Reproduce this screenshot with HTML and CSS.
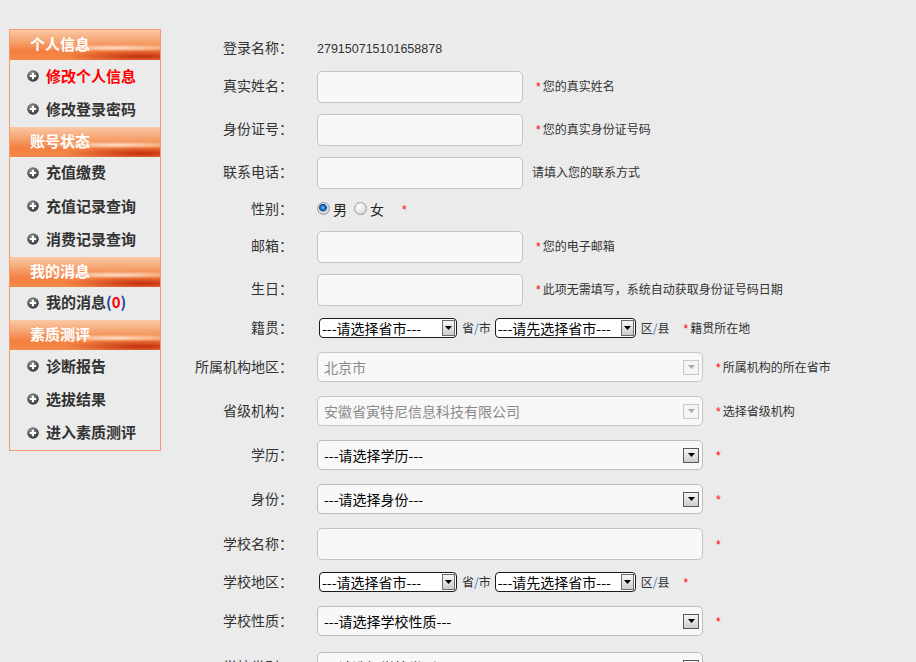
FILE: index.html
```html
<!DOCTYPE html>
<html lang="zh-CN">
<head>
<meta charset="utf-8">
<title>个人信息</title>
<link rel="stylesheet" href="styles.css">
</head>
<body>
<svg class="defs" width="0" height="0" aria-hidden="true">
  <defs>
    <radialGradient id="ball" cx="40%" cy="30%" r="75%">
      <stop offset="0" stop-color="#9a9a9a"/>
      <stop offset="0.6" stop-color="#555"/>
      <stop offset="1" stop-color="#333"/>
    </radialGradient>
  </defs>
</svg>
<div class="page">
  <aside class="side">
    <div class="side-head">个人信息</div>
    <ul class="side-list">
      <li class="active"><svg class="ico" viewBox="0 0 12 12"><circle cx="6" cy="6" r="5.8" fill="url(#ball)"/><path d="M6 2.8v6.4M2.8 6h6.4" stroke="#fff" stroke-width="2"/></svg>修改个人信息</li>
      <li><svg class="ico" viewBox="0 0 12 12"><circle cx="6" cy="6" r="5.8" fill="url(#ball)"/><path d="M6 2.8v6.4M2.8 6h6.4" stroke="#fff" stroke-width="2"/></svg>修改登录密码</li>
    </ul>
    <div class="side-head">账号状态</div>
    <ul class="side-list">
      <li><svg class="ico" viewBox="0 0 12 12"><circle cx="6" cy="6" r="5.8" fill="url(#ball)"/><path d="M6 2.8v6.4M2.8 6h6.4" stroke="#fff" stroke-width="2"/></svg>充值缴费</li>
      <li><svg class="ico" viewBox="0 0 12 12"><circle cx="6" cy="6" r="5.8" fill="url(#ball)"/><path d="M6 2.8v6.4M2.8 6h6.4" stroke="#fff" stroke-width="2"/></svg>充值记录查询</li>
      <li><svg class="ico" viewBox="0 0 12 12"><circle cx="6" cy="6" r="5.8" fill="url(#ball)"/><path d="M6 2.8v6.4M2.8 6h6.4" stroke="#fff" stroke-width="2"/></svg>消费记录查询</li>
    </ul>
    <div class="side-head">我的消息</div>
    <ul class="side-list">
      <li><svg class="ico" viewBox="0 0 12 12"><circle cx="6" cy="6" r="5.8" fill="url(#ball)"/><path d="M6 2.8v6.4M2.8 6h6.4" stroke="#fff" stroke-width="2"/></svg>我的消息<span class="paren">(</span><span class="count">0</span><span class="paren">)</span></li>
    </ul>
    <div class="side-head">素质测评</div>
    <ul class="side-list">
      <li><svg class="ico" viewBox="0 0 12 12"><circle cx="6" cy="6" r="5.8" fill="url(#ball)"/><path d="M6 2.8v6.4M2.8 6h6.4" stroke="#fff" stroke-width="2"/></svg>诊断报告</li>
      <li><svg class="ico" viewBox="0 0 12 12"><circle cx="6" cy="6" r="5.8" fill="url(#ball)"/><path d="M6 2.8v6.4M2.8 6h6.4" stroke="#fff" stroke-width="2"/></svg>选拔结果</li>
      <li><svg class="ico" viewBox="0 0 12 12"><circle cx="6" cy="6" r="5.8" fill="url(#ball)"/><path d="M6 2.8v6.4M2.8 6h6.4" stroke="#fff" stroke-width="2"/></svg>进入素质测评</li>
    </ul>
  </aside>

  <form class="form">
    <div class="row row-static">
      <span class="lbl">登录名称：</span>
      <div class="field"><span class="value">279150715101658878</span></div>
    </div>
    <div class="row">
      <span class="lbl">真实姓名：</span>
      <div class="field"><input class="txt" type="text"><span class="hint"><i class="req">*</i>您的真实姓名</span></div>
    </div>
    <div class="row">
      <span class="lbl">身份证号：</span>
      <div class="field"><input class="txt" type="text"><span class="hint"><i class="req">*</i>您的真实身份证号码</span></div>
    </div>
    <div class="row">
      <span class="lbl">联系电话：</span>
      <div class="field"><input class="txt" type="text"><span class="hint">请填入您的联系方式</span></div>
    </div>
    <div class="row row-radio">
      <span class="lbl">性别：</span>
      <div class="field">
        <label class="opt"><input class="radio" type="radio" name="sex" checked>男</label>
        <label class="opt"><input class="radio" type="radio" name="sex">女</label>
        <i class="req req-far">*</i>
      </div>
    </div>
    <div class="row">
      <span class="lbl">邮箱：</span>
      <div class="field"><input class="txt" type="text"><span class="hint"><i class="req">*</i>您的电子邮箱</span></div>
    </div>
    <div class="row">
      <span class="lbl">生日：</span>
      <div class="field"><input class="txt" type="text"><span class="hint"><i class="req">*</i>此项无需填写，系统自动获取身份证号码日期</span></div>
    </div>
    <div class="row row-area">
      <span class="lbl">籍贯：</span>
      <div class="field field-area">
        <div class="sel sel-sm"><span>---请选择省市---</span><span class="sel-btn"><svg viewBox="0 0 7 4"><path d="M0 0h7L3.5 4z"/></svg></span></div>
        <span class="unit">省<b class="slash">/</b>市</span>
        <div class="sel sel-sm sel-sm2"><span>---请先选择省市---</span><span class="sel-btn"><svg viewBox="0 0 7 4"><path d="M0 0h7L3.5 4z"/></svg></span></div>
        <span class="unit">区<b class="slash">/</b>县</span>
        <span class="hint hint-far"><i class="req">*</i>籍贯所在地</span>
      </div>
    </div>
    <div class="row row-sel">
      <span class="lbl">所属机构地区：</span>
      <div class="field">
        <div class="sel is-disabled"><span>北京市</span><span class="sel-btn"><svg viewBox="0 0 7 4"><path d="M0 0h7L3.5 4z"/></svg></span></div>
        <span class="hint"><i class="req">*</i>所属机构的所在省市</span>
      </div>
    </div>
    <div class="row row-sel">
      <span class="lbl">省级机构：</span>
      <div class="field">
        <div class="sel is-disabled"><span>安徽省寅特尼信息科技有限公司</span><span class="sel-btn"><svg viewBox="0 0 7 4"><path d="M0 0h7L3.5 4z"/></svg></span></div>
        <span class="hint"><i class="req">*</i>选择省级机构</span>
      </div>
    </div>
    <div class="row row-sel">
      <span class="lbl">学历：</span>
      <div class="field">
        <div class="sel"><span>---请选择学历---</span><span class="sel-btn"><svg viewBox="0 0 7 4"><path d="M0 0h7L3.5 4z"/></svg></span></div>
        <span class="hint"><i class="req">*</i></span>
      </div>
    </div>
    <div class="row row-sel">
      <span class="lbl">身份：</span>
      <div class="field">
        <div class="sel"><span>---请选择身份---</span><span class="sel-btn"><svg viewBox="0 0 7 4"><path d="M0 0h7L3.5 4z"/></svg></span></div>
        <span class="hint"><i class="req">*</i></span>
      </div>
    </div>
    <div class="row row-wide">
      <span class="lbl">学校名称：</span>
      <div class="field"><input class="txt txt-wide" type="text"><span class="hint"><i class="req">*</i></span></div>
    </div>
    <div class="row row-area2">
      <span class="lbl">学校地区：</span>
      <div class="field field-area">
        <div class="sel sel-sm"><span>---请选择省市---</span><span class="sel-btn"><svg viewBox="0 0 7 4"><path d="M0 0h7L3.5 4z"/></svg></span></div>
        <span class="unit">省<b class="slash">/</b>市</span>
        <div class="sel sel-sm sel-sm2"><span>---请先选择省市---</span><span class="sel-btn"><svg viewBox="0 0 7 4"><path d="M0 0h7L3.5 4z"/></svg></span></div>
        <span class="unit">区<b class="slash">/</b>县</span>
        <span class="hint hint-far"><i class="req">*</i></span>
      </div>
    </div>
    <div class="row row-sel2">
      <span class="lbl">学校性质：</span>
      <div class="field">
        <div class="sel"><span>---请选择学校性质---</span><span class="sel-btn"><svg viewBox="0 0 7 4"><path d="M0 0h7L3.5 4z"/></svg></span></div>
        <span class="hint"><i class="req">*</i></span>
      </div>
    </div>
    <div class="row row-sel">
      <span class="lbl">学校类别：</span>
      <div class="field">
        <div class="sel"><span>---请选择学校类别---</span><span class="sel-btn"><svg viewBox="0 0 7 4"><path d="M0 0h7L3.5 4z"/></svg></span></div>
        <span class="hint"><i class="req">*</i></span>
      </div>
    </div>
  </form>
</div>
</body>
</html>
```

FILE: styles.css
```css
html, body {
  margin: 0;
  background: #ebebeb;
}
body {
  font-family: "Noto Sans CJK SC", "Noto Sans", sans-serif;
  color: #333;
}
.defs {
  position: absolute;
  width: 0;
  height: 0;
}
.page {
  display: flex;
  align-items: flex-start;
}

/* sidebar */
.side {
  box-sizing: border-box;
  width: 152px;
  margin: 29px 0 0 9px;
  border: 1px solid #f59b74;
}
.side-head {
  height: 30px;
  line-height: 28px;
  padding-left: 20px;
  color: #fff;
  font-size: 15px;
  font-weight: 700;
  background:
    radial-gradient(ellipse 75% 32% at 88% 88%, rgba(190, 36, 6, 0.9), rgba(190, 36, 6, 0) 70%),
    radial-gradient(ellipse 70% 16% at 70% 60%, rgba(255, 238, 222, 0.85), rgba(255, 238, 222, 0) 75%),
    linear-gradient(to bottom, #fac9a6 0%, #f6a673 35%, #f37f40 70%, #f48a48 100%);
}
.side-list {
  list-style: none;
  margin: 0;
  padding: 0;
}
.side-list li {
  box-sizing: border-box;
  height: 33.33px;
  display: flex;
  align-items: center;
  padding: 0 0 3px 17px;
  font-size: 15px;
  font-weight: 700;
  color: #333;
}
.side-list li.active {
  color: #f00;
}
.ico {
  width: 12px;
  height: 12px;
  margin: 2px 7px 0 0;
  flex: none;
}
.paren {
  color: #1d3f94;
}
.count {
  color: #f00;
}

/* form */
.form {
  margin: 0 0 0 9px;
  padding-top: 32px;
  font-size: 14px;
}
.row {
  display: flex;
  align-items: center;
  height: 43px;
}
.row-static { height: 33px; }
.row-radio { height: 31px; }
.row-area { height: 34px; }
.row-sel { height: 44px; }
.row-wide { height: 46px; }
.row-area2 { height: 30px; }
.row-sel2 { height: 48px; }

.lbl {
  flex: none;
  width: 123px;
  padding-bottom: 3px;
  text-align: right;
  color: #333;
}
.field {
  margin-left: 24px;
  display: flex;
  align-items: center;
  white-space: nowrap;
}
.field-area {
  margin-left: 26px;
}
.value {
  font-family: "Liberation Sans", Arial, sans-serif;
  font-size: 12.5px;
  color: #333;
}
.txt {
  box-sizing: border-box;
  width: 206px;
  height: 32px;
  margin: 0;
  padding: 0 6px;
  border: 1px solid #c3c3c3;
  border-radius: 5px;
  background: #f8f8f8;
  font-family: inherit;
  font-size: 14px;
}
.txt-wide {
  width: 386px;
}
.hint {
  margin-left: 9px;
  padding-bottom: 2px;
  font-size: 12px;
  color: #333;
}
.hint-far {
  margin-left: 6px;
}
.req {
  font-style: normal;
  font-family: "Liberation Sans", Arial, sans-serif;
  font-size: 12px;
  color: #f00;
  margin: 0 2px 0 4px;
}
.req-far {
  margin-left: 11px;
}

/* radio */
.opt {
  display: flex;
  align-items: center;
  margin-right: 7px;
  padding-bottom: 2px;
  color: #222;
}
.radio {
  -webkit-appearance: none;
  appearance: none;
  box-sizing: border-box;
  width: 13px;
  height: 13px;
  margin: 0 3px 0 0;
  border: 1px solid #9c9c9c;
  border-radius: 50%;
  background: radial-gradient(circle at 40% 35%, #ffffff 0, #e4e4e4 55%, #c4c4c4 100%);
}
.radio:checked {
  background:
    radial-gradient(circle at 45% 42%, #8fd0ff 0, #2a82d0 1.6px, #0d4f96 3.6px, rgba(13, 79, 150, 0) 4.2px),
    radial-gradient(circle at 40% 35%, #ffffff 0, #dedede 55%, #bcbcbc 100%);
}

/* select look */
.sel {
  box-sizing: border-box;
  display: flex;
  align-items: center;
  justify-content: space-between;
  width: 386px;
  height: 30px;
  padding: 0 3px 0 6px;
  border: 1px solid #bdbdbd;
  border-radius: 5px;
  background: #f8f8f8;
  color: #000;
  font-size: 14px;
}
.sel-btn {
  box-sizing: border-box;
  flex: none;
  display: flex;
  align-items: center;
  justify-content: center;
  width: 16px;
  height: 15px;
  border: 1px solid #585858;
  background: linear-gradient(#f6f6f6, #cdcdcd);
}
.sel-btn svg {
  width: 7px;
  height: 4px;
  fill: #000;
}
.sel.is-disabled {
  color: #8a8a8a;
  border-color: #c6c6c6;
}
.sel.is-disabled .sel-btn {
  border-color: #c9c9c9;
  background: #f5f5f5;
}
.sel.is-disabled .sel-btn svg {
  fill: #a9a9a9;
}
.sel-sm {
  width: 138px;
  height: 20px;
  padding: 0 1px 0 2px;
  border: 1px solid #1a1a1a;
  border-radius: 4px;
  background: #fff;
}
.sel-sm2 {
  width: 141px;
}
.sel-sm .sel-btn {
  width: 13px;
  height: 16px;
  border-color: #6b6b6b;
}
.unit {
  margin: 0 4px 0 5px;
  padding-bottom: 2px;
  font-size: 12px;
  color: #333;
}
.slash {
  font-weight: 400;
  color: #3b7ccc;
}
```
